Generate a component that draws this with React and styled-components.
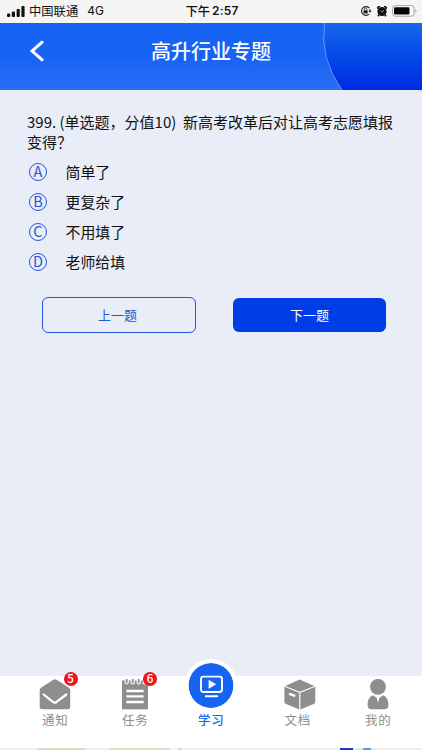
import React from "react";
import styled, { createGlobalStyle } from "styled-components";

const Global = createGlobalStyle`
  * { box-sizing: border-box; }
  body { margin: 0; background: #fff; }
  button { font: inherit; padding: 0; cursor: pointer; }
  svg { display: block; flex: none; }
`;

const Screen = styled.div`
  width: 422px;
  height: 750px;
  display: flex;
  flex-direction: column;
  overflow: hidden;
  background: #e8edf7;
  color: #111;
  font-family: "Noto Sans CJK SC", sans-serif;
`;

const StatusBar = styled.div`
  height: 23px;
  flex: none;
  display: grid;
  grid-template-columns: 1fr auto 1fr;
  align-items: center;
  padding: 0 5px 1px 7px;
  background: #f5f5f4;
  color: #111;
  font-size: 12.3px;
  line-height: 20px;
`;

const StatusGroup = styled.div`
  display: flex;
  align-items: center;
  gap: ${(p) => p.$gap}px;
  justify-content: ${(p) => (p.$end ? "flex-end" : "flex-start")};
`;

const Latin = styled.span`
  font-family: Inter, sans-serif;
  font-size: 12px;
  margin-left: 5px;
`;

const Clock = styled.div`
  display: flex;
  align-items: center;
  gap: 2px;
  font-weight: 500;
  white-space: nowrap;
  b {
    font: 600 12px/20px Inter, sans-serif;
    letter-spacing: 0.2px;
  }
`;

const Header = styled.header`
  height: 67px;
  flex: none;
  position: relative;
  display: grid;
  grid-template-columns: 60px 1fr 60px;
  align-items: center;
  padding-bottom: 11px;
  overflow: hidden;
  background: linear-gradient(#1764f3, #1763f4 50%, #286ff5);
`;

const Swoosh = styled.svg`
  position: absolute;
  right: 0;
  top: 0;
`;

const BackButton = styled.button`
  border: 0;
  background: none;
  padding-left: 29px;
  height: 40px;
`;

const Title = styled.h1`
  position: relative;
  margin: 0;
  text-align: center;
  color: #fff;
  font-size: 20px;
  line-height: 30px;
  font-weight: 500;
`;

const Content = styled.main`
  flex: 1;
  padding: 22px 27px 0;
`;

const Question = styled.p`
  margin: 0;
  width: 370px;
  font-size: 15px;
  line-height: 20px;
`;

const Options = styled.div`
  display: flex;
  flex-direction: column;
  padding-top: 5px;
`;

const Option = styled.div`
  height: 29.9px;
  display: flex;
  align-items: center;
  gap: 18.5px;
  padding-left: 2px;
  font-size: 14.9px;
  line-height: 22px;
`;

const Letter = styled.span`
  width: 18px;
  height: 18px;
  border: 1px solid #2856d8;
  border-radius: 50%;
  display: flex;
  align-items: center;
  justify-content: center;
  color: #2856d8;
  font-size: 14.5px;
  line-height: 14px;
  padding-bottom: 1px;
`;

const Actions = styled.div`
  display: flex;
  justify-content: space-between;
  align-items: center;
  padding: 20px 9px 0 15px;
`;

const ActionButton = styled.button`
  width: ${(p) => (p.$primary ? 153 : 154)}px;
  height: ${(p) => (p.$primary ? 34 : 36)}px;
  border: ${(p) => (p.$primary ? "0" : "1px solid #2856d8")};
  border-radius: 6px;
  background: ${(p) => (p.$primary ? "#003de6" : "transparent")};
  color: ${(p) => (p.$primary ? "#fff" : "#2856d8")};
  font-size: 13px;
  line-height: 20px;
  padding-right: ${(p) => (p.$primary ? 0 : 3)}px;
`;

const TabBar = styled.nav`
  height: 72px;
  flex: none;
  display: grid;
  grid-template-columns: 80px 80px 72px 101px 60px;
  padding-left: 15px;
  background: #fff;
`;

const Tab = styled.div`
  position: relative;
  display: flex;
  flex-direction: column;
  align-items: center;
  padding-top: 3px;
  color: ${(p) => (p.$active ? "#1764f3" : "#8e8e8e")};
`;

const TabLabel = styled.span`
  font-size: 12.5px;
  line-height: 19px;
  letter-spacing: 0.8px;
  padding-left: 0.5px;
  font-weight: ${(p) => (p.$active ? 500 : 400)};
`;

const IconBox = styled.div`
  position: relative;
  height: 31px;
  width: ${(p) => p.$width}px;
  padding-left: ${(p) => p.$inset || 0}px;
  display: flex;
  justify-content: center;
`;

const Badge = styled.span`
  position: absolute;
  top: -7px;
  right: ${(p) => p.$right}px;
  width: 14px;
  height: 13.5px;
  border-radius: 50%;
  background: #f5141b;
  color: #fff;
  font-size: 11.5px;
  font-weight: 500;
  line-height: 12.5px;
  text-align: center;
`;

const ActiveDisc = styled.div`
  position: absolute;
  top: -20px;
  left: 50%;
  transform: translateX(-50%);
  width: 53px;
  height: 53px;
  border: 4px solid #fff;
  border-radius: 50%;
  background: #1764f3;
  background-clip: padding-box;
  display: flex;
  align-items: center;
  justify-content: center;
`;

const FooterStrip = styled.div`
  height: 2px;
  flex: none;
  background: linear-gradient(
    90deg,
    #eeeeed 0 38px, #e2d8c4 38px 85px, #f0eee8 85px 110px, #e4dccb 110px 170px,
    #f6f4ef 170px 178px, #e9d9b9 178px 182px, #f2f0ec 182px 340px,
    #2239bd 340px 353px, #e8e8ea 353px 363px, #5d9ed1 363px 371px, #efefef 371px
  );
`;

const options = [
  ["A", "简单了"],
  ["B", "更复杂了"],
  ["C", "不用填了"],
  ["D", "老师给填"],
];

const SignalIcon = () => (
  <svg width="18" height="11" viewBox="0 0 18 11" fill="#111">
    <rect x="0" y="7.5" width="3.2" height="3.5" rx="1" />
    <rect x="4.8" y="5.5" width="3.2" height="5.5" rx="1" />
    <rect x="9.6" y="3" width="3.2" height="8" rx="1" />
    <rect x="14.4" y="0" width="3.2" height="11" rx="1" />
  </svg>
);

const LockIcon = () => (
  <svg width="12" height="12" viewBox="0 0 12 12" fill="none" stroke="#222">
    <path d="M9.4 3.2A4.4 4.4 0 1 0 9 9.2M9.9 4.2v2.3" strokeWidth="1.1" />
    <path d="M8.3 5.7h3.4L10 7.8z" fill="#222" stroke="none" />
    <rect x="3.5" y="5.3" width="4.2" height="3.2" rx=".5" fill="#222" stroke="none" />
    <path d="M4.4 5.4V4.3a1.2 1.2 0 0 1 2.4 0v1.1" strokeWidth=".8" />
  </svg>
);

const AlarmIcon = () => (
  <svg width="10" height="11" viewBox="0 0 10 11">
    <path d="M.6 2.8A1.8 1.8 0 0 1 3 .8M9.4 2.8A1.8 1.8 0 0 0 7 .8M2 8.8 1.1 10.2M8 8.8l.9 1.4" fill="none" stroke="#111" strokeWidth="1.6" />
    <circle cx="5" cy="5.5" r="4.6" fill="#111" />
    <path d="M6.8 4.2 5 6 3.6 5" fill="none" stroke="#ddd" strokeWidth=".7" />
  </svg>
);

const BatteryIcon = () => (
  <svg width="25" height="12" viewBox="0 0 25 12">
    <rect x=".5" y=".6" width="21.5" height="10.6" rx="2.8" fill="#fafafa" stroke="#a4a4a4" />
    <rect x="2" y="2.2" width="15.5" height="7.4" rx="1.4" fill="#050505" />
    <path d="M23.3 4.2v3.4q1.3-.5 1.3-1.7t-1.3-1.7" fill="#a4a4a4" />
  </svg>
);

const MailIcon = () => (
  <svg width="32" height="31" viewBox="0 0 32 31">
    <path d="M14.3.8Q16-.5 17.7.8L30 8.8q1.2.8 1.2 2.4v16.6q0 2.5-2.5 2.5H3.2q-2.5 0-2.5-2.5V11.2q0-1.6 1.3-2.4z" fill="#8e8e8e" />
    <path d="m4.7 15.5 9.4 7.5q1.7 1.2 3.3 0l9.9-7.5" fill="none" stroke="#fff" strokeWidth="2.2" strokeLinecap="round" />
  </svg>
);

const NoteIcon = () => (
  <svg width="26" height="31" viewBox="0 0 26 31">
    <path d="M0 1.4h26v28.9H0z" fill="#8e8e8e" />
    <path d="M2.6 0v3.4a2.1 2.1 0 0 0 4.2 0V0M8.6 0v3.4a2.1 2.1 0 0 0 4.2 0V0M14.6 0v3.4a2.1 2.1 0 0 0 4.2 0V0M20.6 0v3.4a2.1 2.1 0 0 0 4.2 0V0" fill="#fff" />
    <path d="M4.7 .8v2.8M10.7 .8v2.8M16.7 .8v2.8M22.7 .8v2.8" stroke="#8e8e8e" strokeWidth="1.9" strokeLinecap="round" />
    <path d="M4.4 12h17.2M4.4 17.4h17.2M4.4 23h17.2" stroke="#fff" strokeWidth="2.3" />
  </svg>
);

const StudyIcon = () => (
  <svg width="24" height="24" viewBox="0 0 24 24" fill="none" stroke="#fff">
    <rect x="1.5" y="2.6" width="21" height="15.4" rx="2.4" strokeWidth="1.9" />
    <path d="M9.4 6.2v8.2l6.8-4.1z" fill="#fff" strokeWidth=".5" strokeLinejoin="round" />
    <path d="M6.3 22.2H17.7" strokeWidth="2.1" strokeLinecap="round" />
  </svg>
);

const BoxIcon = () => (
  <svg width="32" height="31" viewBox="0 0 32 31" fill="#8e8e8e">
    <path d="M15.6.4 30.4 7 15.8 12.8 1.3 7z" />
    <path d="M.4 7.8 15.2 13.7v16.8L1.5 24.8Q.4 24.3.4 23z" />
    <path d="M31.3 7.8 16.4 13.7v16.8l13.8-5.7q1.1-.5 1.1-1.8z" />
    <path d="m5.9 15.2 4.4 1.5" stroke="#fff" strokeWidth="2.4" strokeLinecap="round" />
  </svg>
);

const PersonIcon = () => (
  <svg width="22" height="31" viewBox="0 0 22 31" fill="#8e8e8e">
    <circle cx="11" cy="7.8" r="7.9" />
    <path d="M5.6 16.2 9.7 18.7 11 24l1.3-5.3 4.1-2.5q5 2.3 5 9.8 0 4.3-4 4.3H4.6q-4 0-4-4.3 0-7.5 5-9.8" />
  </svg>
);

const tabs = [
  { label: "通知", Icon: MailIcon, badge: 5, badgeRight: -6.5, width: 32 },
  { label: "任务", Icon: NoteIcon, badge: 6, badgeRight: -9, width: 26 },
  { label: "学习", Icon: StudyIcon, active: true, width: 44 },
  { label: "文档", Icon: BoxIcon, width: 36, inset: 4 },
  { label: "我的", Icon: PersonIcon, width: 22 },
];

export default function App() {
  return (
    <>
      <Global />
      <Screen>
        <StatusBar>
          <StatusGroup $gap={4}>
            <SignalIcon />
            <span>中国联通</span>
            <Latin>4G</Latin>
          </StatusGroup>
          <Clock>
            下午<b>2:57</b>
          </Clock>
          <StatusGroup $gap={5} $end>
            <LockIcon />
            <AlarmIcon />
            <BatteryIcon />
          </StatusGroup>
        </StatusBar>
        <Header>
          <Swoosh width="100" height="67" viewBox="0 0 100 67">
            <defs>
              <linearGradient id="swooshFill" x1="0" y1="0" x2="0" y2="1">
                <stop offset="0" stopColor="#1767ed" />
                <stop offset="0.5" stopColor="#0349e8" />
                <stop offset="1" stopColor="#0029e2" />
              </linearGradient>
            </defs>
            <path d="M2.5 0Q-2.5 36 20 67H100V0z" fill="url(#swooshFill)" />
            <path d="M2.5 0Q-2.5 36 20 67" fill="none" stroke="#659af8" />
          </Swoosh>
          <BackButton aria-label="返回">
            <svg width="16" height="22" viewBox="0 0 16 22" fill="none" stroke="#fff" strokeWidth="3">
              <path d="M14 1.3 3 11l11 9.6" />
            </svg>
          </BackButton>
          <Title>高升行业专题</Title>
        </Header>
        <Content>
          <Question>
            399. (单选题，分值10)&nbsp; 新高考改革后对让高考志愿填报变得？
          </Question>
          <Options>
            {options.map(([letter, text]) => (
              <Option key={letter}>
                <Letter>{letter}</Letter>
                <span>{text}</span>
              </Option>
            ))}
          </Options>
          <Actions>
            <ActionButton>上一题</ActionButton>
            <ActionButton $primary>下一题</ActionButton>
          </Actions>
        </Content>
        <TabBar>
          {tabs.map(({ label, Icon, badge, badgeRight, active, width, inset }) => (
            <Tab key={label} $active={active}>
              <IconBox $width={width} $inset={inset}>
                {active ? (
                  <ActiveDisc>
                    <Icon />
                  </ActiveDisc>
                ) : (
                  <Icon />
                )}
                {badge && <Badge $right={badgeRight}>{badge}</Badge>}
              </IconBox>
              <TabLabel $active={active}>{label}</TabLabel>
            </Tab>
          ))}
        </TabBar>
        <FooterStrip />
      </Screen>
    </>
  );
}
